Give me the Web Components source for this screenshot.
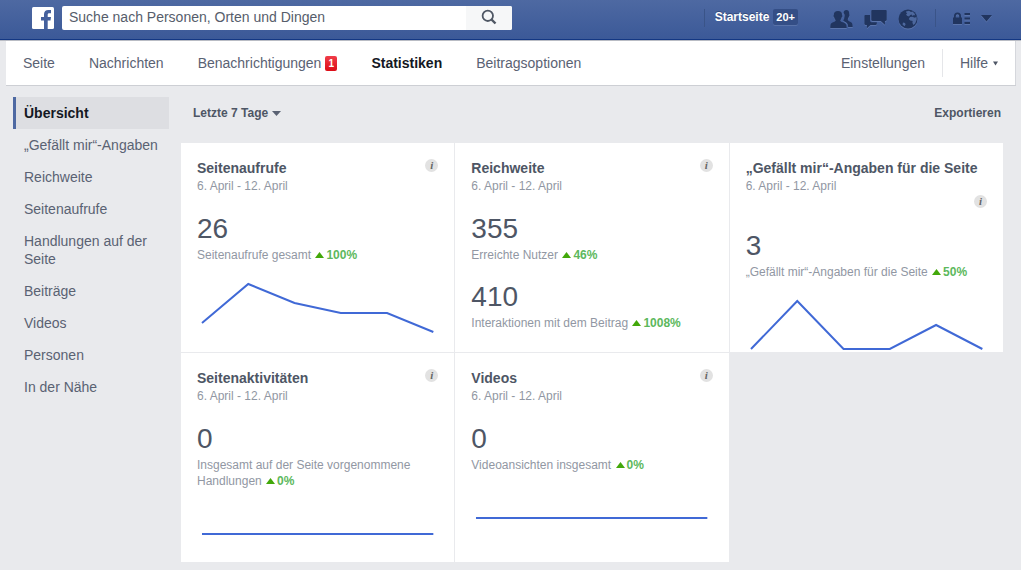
<!DOCTYPE html>
<html lang="de">
<head>
<meta charset="utf-8">
<meta name="viewport" content="width=device-width, initial-scale=1">
<title>Seitenstatistiken</title>
<style>
body { margin: 0; background: #e9eaed; color: #4e5665; font: 14px/18px "Liberation Sans", Arial, sans-serif; }
.page { display: grid; grid-template-columns: 156px minmax(0, 1fr); column-gap: 12px; padding: 11px 18px 8px 13px; }
.cards { display: grid; grid-template-columns: repeat(3, minmax(0, 1fr)); grid-auto-rows: minmax(209px, auto); gap: 1px; margin-top: 14px; }
</style>
</head>
<body>
<top-bar></top-bar>
<page-tabs>
  <page-tab>Seite</page-tab>
  <page-tab>Nachrichten</page-tab>
  <page-tab count="1">Benachrichtigungen</page-tab>
  <page-tab active>Statistiken</page-tab>
  <page-tab>Beitragsoptionen</page-tab>
  <page-tab slot="end">Einstellungen</page-tab>
  <page-tab slot="end" menu>Hilfe</page-tab>
</page-tabs>
<div class="page">
  <side-nav>
    <side-link active>Übersicht</side-link>
    <side-link>„Gefällt mir“-Angaben</side-link>
    <side-link>Reichweite</side-link>
    <side-link>Seitenaufrufe</side-link>
    <side-link>Handlungen auf der Seite</side-link>
    <side-link>Beiträge</side-link>
    <side-link>Videos</side-link>
    <side-link>Personen</side-link>
    <side-link>In der Nähe</side-link>
  </side-nav>
  <main>
    <range-bar></range-bar>
    <div class="cards">
      <insight-card>
        <span slot="title">Seitenaufrufe</span><span slot="date">6. April - 12. April</span>
        <insight-metric value="26" change="100%">Seitenaufrufe gesamt</insight-metric>
        <spark-line points="60 21 40 50 50 69"></spark-line>
      </insight-card>
      <insight-card>
        <span slot="title">Reichweite</span><span slot="date">6. April - 12. April</span>
        <insight-metric value="355" change="46%">Erreichte Nutzer</insight-metric>
        <insight-metric value="410" change="1008%">Interaktionen mit dem Beitrag</insight-metric>
      </insight-card>
      <insight-card>
        <span slot="title">„Gefällt mir“-Angaben für die Seite</span><span slot="date">6. April - 12. April</span>
        <insight-metric value="3" change="50%">„Gefällt mir“-Angaben für die Seite</insight-metric>
        <spark-line points="69 21 69 69 45 69"></spark-line>
      </insight-card>
      <insight-card>
        <span slot="title">Seitenaktivitäten</span><span slot="date">6. April - 12. April</span>
        <insight-metric value="0" change="0%">Insgesamt auf der Seite vorgenommene Handlungen</insight-metric>
        <spark-line points="45 45 45 45 45 45"></spark-line>
      </insight-card>
      <insight-card>
        <span slot="title">Videos</span><span slot="date">6. April - 12. April</span>
        <insight-metric value="0" change="0%">Videoansichten insgesamt</insight-metric>
        <spark-line points="45 45 45 45 45 45"></spark-line>
      </insight-card>
    </div>
  </main>
</div>
<script>
function define(name, render) {
  customElements.define(name, class extends HTMLElement {
    connectedCallback() {
      if (this.shadowRoot) return;
      this.attachShadow({ mode: "open" }).innerHTML = render(this);
    }
  });
}

define("top-bar", () => `
<style>
:host { display: block; background: linear-gradient(#4e69a2, #3b5998); border-bottom: 1px solid #133783; box-shadow: 0 1px 0 #b9bcc4; }
header { display: flex; align-items: center; height: 39px; box-sizing: border-box; padding: 0 29px 3px 32px; }
a { color: #fff; text-decoration: none; }
svg { display: block; }
form { display: flex; flex: 0 1 450px; min-width: 160px; height: 24px; margin-left: 8px; border-radius: 2px; overflow: hidden; background: #fff; }
input { flex: 1; min-width: 0; border: 0; padding: 0 7px 2px; background: none; font: 14px "Liberation Sans", Arial, sans-serif; color: #4e5665; outline: 0; }
input::placeholder { color: #565d6b; opacity: 1; }
button { border: 0; padding: 0; background: none; cursor: pointer; }
.go { width: 46px; background: #f6f7f8; display: grid; place-items: center; padding-bottom: 2px; }
.right { display: flex; align-items: center; margin-left: auto; }
.sep { width: 1px; height: 18px; background: #3a5488; }
.home { display: flex; align-items: center; gap: 4px; margin: 0 0 2px 10px; font-size: 12px; line-height: 16px; font-weight: bold; text-shadow: 0 -1px 0 #32497a; }
.count { background: #344e86; border-radius: 2px; padding: 0 3px; font-size: 11px; box-shadow: 0 1px 0 #5872a8; }
.icons { display: flex; align-items: center; gap: 11px; margin: 2px 17px 0 32px; }
.small { display: flex; align-items: center; gap: 11px; margin: 0 0 0 17px; }
.icons svg, .small svg { fill: #21355f; filter: drop-shadow(0 1px 0 #5a74ab); }
</style>
<header>
  <a href="#" aria-label="Facebook"><svg width="22" height="22" viewBox="0 0 22 22"><rect width="22" height="22" rx="1.5" fill="#fff"/><path d="M12 22v-8.500H9V10h3V7.300C12 4.400 13.800 3 16.300 3H19v3.200h-1.700c-1.300 0-1.600.6-1.600 1.500V10H19l-.5 3.500h-2.800V22z" fill="#45619d"/></svg></a>
  <form role="search" onsubmit="return false">
    <input type="text" aria-label="Suche" placeholder="Suche nach Personen, Orten und Dingen">
    <button class="go" aria-label="Suchen"><svg width="16" height="16" viewBox="0 0 16 16" fill="none" stroke="#4f5764"><circle cx="6.800" cy="6.800" r="5.200" stroke-width="1.800"/><path d="M10.500 10.500 14.500 14.500" stroke-width="2.400"/></svg></button>
  </form>
  <div class="right">
    <span class="sep"></span>
    <a class="home" href="#"><span>Startseite</span><span class="count">20+</span></a>
    <div class="icons">
      <button aria-label="Freundschaftsanfragen"><svg width="23" height="20" viewBox="0 0 23 20"><path d="M14.500 12.500c-.5-.4-1-.5-1.300-1 1-1.200 1.100-2.300 1.100-3 .6-1.400.4-3.400-.7-4.400C13.500 1.800 15 1 16.200 1c2.300 0 3.200 1.600 3 4.200.6.700.2 2-.4 2.500-.2 1-.7 1.700-1 2.200 0 1.400.5 2 1.700 2.500 2.100.8 3.200 1.600 3.200 5.600h-4.500c-.2-3.300-1.700-4.600-3.700-5.500z"/><path d="M.3 19c0-4 .7-5 3-5.700 1.500-.5 2.300-.9 2.300-2.200-.6-.5-1-1.400-1.200-2.400-.9-.7-1.200-2.200-.5-2.900C3.700 3.300 5.300 2 8 2s4.200 1.200 4 3.900c.7.7.3 2.100-.4 2.700-.2 1.100-.6 2-1.200 2.600 0 1.200.8 1.600 2.300 2.100 2.700.8 4 1.900 4 5.700z"/></svg></button>
      <button aria-label="Nachrichten"><svg width="23" height="20" viewBox="0 0 23 20"><path d="M8.500 1h13c.8 0 1.200.5 1.200 1.200v8.600c0 .7-.5 1.200-1.200 1.200h-.6v3.800L16.800 12H8.500c-.8 0-1.200-.5-1.200-1.200V2.200C7.300 1.500 7.800 1 8.500 1z"/><path d="M1.600 6H6v5.500c0 1.200.8 1.800 2 1.800h4.800v1.500c0 .7-.4 1.200-1.200 1.200H6.500l-3.600 3.200V16H1.600C.9 16 .4 15.500.4 14.800V7.200C.4 6.500.9 6 1.600 6z"/></svg></button>
      <button aria-label="Benachrichtigungen"><svg width="20" height="20" viewBox="0 0 20 20"><circle cx="10" cy="10" r="9.500"/><path fill="#4d689e" d="M8 2.500 11 1.800l2 1.200 1.500-.5 2 2 .8 2-1.500-.5-1.200 1-1-1.500-1.400.4-1.200 1.600-2-.7-1-1.500 1.200-.5-.8-1zM12 8l2.300-.2 2.700 1 1.500-1.200.2 3-1.500 4-2 1.500-.8-2.500.3-1.700-2.500-.3-1.400-1.500zM5 13.500l2 .6.600 1.300-1.100 1.800-2-1.800z"/></svg></button>
    </div>
    <span class="sep"></span>
    <div class="small">
      <button aria-label="Privatsphäre"><svg width="17" height="12" viewBox="0 0 17 12"><path d="M0 5.500h1V4a3.500 3.500 0 0 1 7 0v1.500h1V12H0zM2.800 5.500h3.400V4a1.700 1.700 0 0 0-3.400 0zM11.500 1H17v2h-5.500zM11.500 5.500H17v2h-5.500zM11.500 10H17v2h-5.500z"/></svg></button>
      <button aria-label="Kontomenü"><svg width="11" height="7" viewBox="0 0 11 7"><path d="M0 0h11L5.500 6.500z"/></svg></button>
    </div>
  </div>
</header>`);

define("page-tabs", () => `
<style>
:host { display: block; margin: 1px 5px 0 6px; background: #fff; border-bottom: 1px solid #cdcfd4; box-shadow: inset -1px 0 0 #d5d7dc; }
nav { display: flex; align-items: center; justify-content: space-between; min-height: 44px; padding: 0 18px 0 17px; }
div { display: flex; align-items: center; gap: 34px; }
.end { gap: 17px; }
</style>
<nav aria-label="Seite"><div><slot></slot></div><div class="end"><slot name="end"></slot></div></nav>`);

define("page-tab", el => `
<style>
:host { display: block; }
:host([menu]) { border-left: 1px solid #e5e6e9; padding: 5px 0 5px 17px; }
a { display: flex; align-items: center; gap: 4px; color: #5a6273; text-decoration: none; white-space: nowrap; }
:host([active]) a { color: #141823; font-weight: bold; }
.count { background: linear-gradient(#f03d49, #dc0d17); color: #fff; border-radius: 2px; font-size: 10px; line-height: 15px; font-weight: bold; width: 12px; text-align: center; }
svg { margin-left: 1px; }
</style>
<a href="#"><span><slot></slot></span>${el.hasAttribute("count") ? `<span class="count">${el.getAttribute("count")}</span>` : ""}${el.hasAttribute("menu") ? `<svg width="5" height="5" viewBox="0 0 5 5"><path d="M0 .5h5L2.500 4.500z" fill="#4e5665"/></svg>` : ""}</a>`);

define("side-nav", () => `
<style>:host { display: block; }</style><nav aria-label="Statistiken"><slot></slot></nav>`);

define("side-link", () => `
<style>
:host { display: block; }
a { display: block; padding: 7px 8px; border-left: 3px solid transparent; color: #5a6273; text-decoration: none; }
:host([active]) a { background: #dddee2; border-color: #4e69a2; color: #141823; font-weight: bold; }
</style>
<a href="#"><slot></slot></a>`);

define("range-bar", () => `
<style>
:host { display: flex; justify-content: space-between; align-items: center; height: 32px; padding: 0 2px 0 12px; font-size: 12px; font-weight: bold; }
button { display: flex; align-items: center; gap: 4px; border: 0; padding: 0; background: none; font: inherit; color: #4e5665; cursor: pointer; }
a { color: #4e5665; text-decoration: none; }
</style>
<button>Letzte 7 Tage<svg width="9" height="5" viewBox="0 0 9 5"><path d="M0 0h9L4.500 5z" fill="#5a6273"/></svg></button>
<a href="#">Exportieren</a>`);

define("insight-card", () => `
<style>
:host { display: block; background: #fff; padding: 16px 16px 0; }
header { display: flex; flex-wrap: wrap; justify-content: space-between; align-items: flex-start; }
h2 { margin: 0; font-size: 14px; line-height: 18px; color: #4e5665; }
p { margin: 0; font-size: 12px; line-height: 18px; color: #9197a3; }
button { width: 13px; height: 13px; margin: 0 0 4px auto; padding: 0; border: 0; border-radius: 50%; background: #e2e2e2; color: #666; font: italic bold 11px/13px "Liberation Serif", "Times New Roman", serif; text-align: center; cursor: pointer; }
</style>
<header><div><h2><slot name="title"></slot></h2><p><slot name="date"></slot></p></div><button>i</button></header>
<slot></slot>`);

define("insight-metric", el => `
<style>
:host { display: block; margin-top: 18px; font-size: 12px; line-height: 16px; color: #9197a3; }
.value { display: block; margin-bottom: 2px; font-size: 28px; line-height: 32px; color: #4e5665; }
.change { white-space: nowrap; color: #5cb85c; }
svg { margin: 0 2px 1px 1px; }
</style>
<span class="value">${el.getAttribute("value")}</span><slot></slot> <b class="change"><svg width="9" height="6" viewBox="0 0 9 6"><path d="M4.500 0 9 6H0z" fill="#42a80a"/></svg>${el.getAttribute("change")}</b>`);

define("spark-line", el => {
  const step = 232 / 5;
  const points = el.getAttribute("points").split(" ").map((y, i) => `${5 + i * step},${y}`).join(" ");
  return `
<style>
:host { display: block; }
svg { display: block; width: 100%; height: 72px; }
</style>
<svg viewBox="0 0 242 72" preserveAspectRatio="none" aria-hidden="true"><polyline points="${points}" fill="none" stroke="#4069d6" stroke-width="2" vector-effect="non-scaling-stroke"/></svg>`;
});
</script>
</body>
</html>
